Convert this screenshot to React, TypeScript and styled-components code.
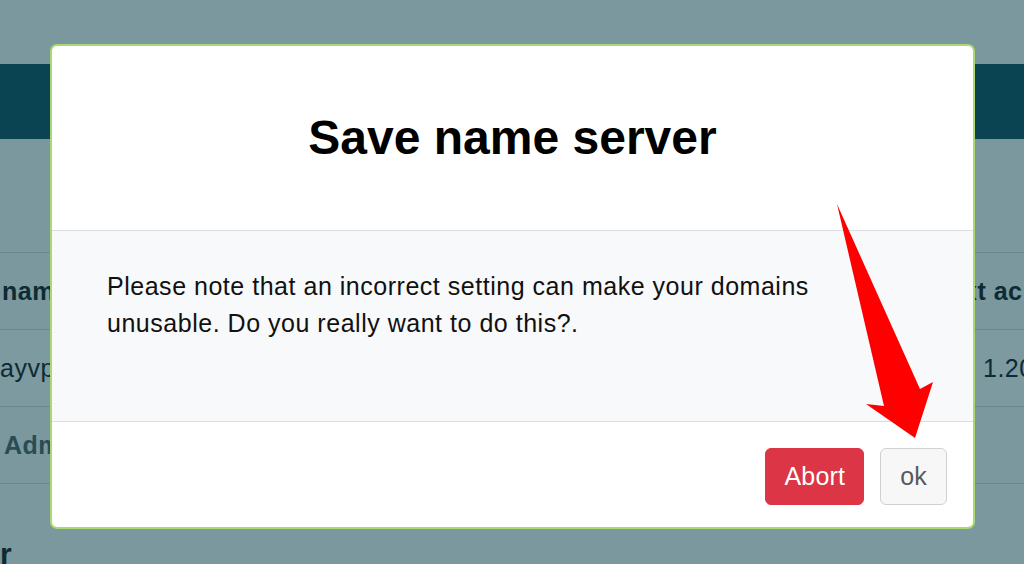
import React from "react";
import styled, { createGlobalStyle } from "styled-components";

const GlobalStyle = createGlobalStyle`
  html, body { margin: 0; padding: 0; }
  body {
    font-family: "Liberation Sans", Arial, Helvetica, sans-serif;
    overflow: hidden;
  }
`;

const Page = styled.div`
  position: relative;
  width: 1024px;
  height: 564px;
  overflow: hidden;
  background: #7a989e;
  display: flex;
  flex-direction: column;
`;

const Navbar = styled.div`
  margin-top: 64px;
  height: 75px;
  background: #0a4351;
  flex-shrink: 0;
`;

const Table = styled.div`
  margin-top: 113px;
  display: flex;
  flex-direction: column;
`;

const Row = styled.div<{ $shade?: boolean }>`
  display: grid;
  grid-template-columns: 963px 1fr;
  align-items: center;
  height: 76px;
  border-top: 1px solid #6a878d;
  background: ${(p) => (p.$shade ? "#7c9aa0" : "transparent")};
  &:last-child {
    border-bottom: 1px solid #6a878d;
  }
`;

const Cell = styled.div<{ $bold?: boolean; $muted?: boolean; $pad?: number }>`
  font-size: 25px;
  letter-spacing: 0.5px;
  line-height: 36px;
  white-space: nowrap;
  overflow: hidden;
  padding-left: ${(p) => p.$pad ?? 0}px;
  font-weight: ${(p) => (p.$bold ? 700 : 400)};
  color: ${(p) => (p.$muted ? "#2a4c55" : "#0e2b33")};
`;

const SectionHeading = styled.div`
  margin-top: 52px;
  font-size: 30px;
  font-weight: 700;
  color: #0e2b33;
  line-height: 36px;
`;

const Modal = styled.div`
  position: absolute;
  left: 50px;
  top: 44px;
  width: 925px;
  height: 485px;
  box-sizing: border-box;
  border: 2px solid #acd872;
  border-radius: 7px;
  background: #ffffff;
  overflow: hidden;
  display: flex;
  flex-direction: column;
`;

const ModalHeader = styled.div`
  height: 184px;
  display: flex;
  align-items: center;
  justify-content: center;
  border-bottom: 1px solid #dcdfe2;
`;

const Title = styled.h1`
  margin: 0;
  font-size: 48px;
  font-weight: 700;
  line-height: 1.2;
  color: #000;
`;

const ModalBody = styled.div`
  height: 191px;
  box-sizing: border-box;
  background: #f8f9fa;
  padding: 37px 100px 0 55px;
  border-bottom: 1px solid #dcdfe2;
  font-size: 25px;
  letter-spacing: 0.52px;
  line-height: 37px;
  color: #111;
`;

const ModalFooter = styled.div`
  flex: 1;
  display: flex;
  align-items: center;
  justify-content: flex-end;
  gap: 16px;
  padding-right: 26px;
  padding-top: 3px;
`;

const Button = styled.button<{ $variant: "danger" | "light" }>`
  font-family: "Liberation Sans", Arial, Helvetica, sans-serif;
  font-size: 25px;
  letter-spacing: 0.2px;
  line-height: 35px;
  padding: 10px ${(p) => (p.$variant === "danger" ? 18 : 19)}px;
  border-radius: 6px;
  border: 1px solid ${(p) => (p.$variant === "danger" ? "#dc3545" : "#cfd1d3")};
  background: ${(p) => (p.$variant === "danger" ? "#dc3545" : "#f7f7f7")};
  color: ${(p) => (p.$variant === "danger" ? "#ffffff" : "#555a5e")};
  cursor: pointer;
`;

const ArrowSvg = styled.svg`
  position: absolute;
  left: 0;
  top: 0;
  pointer-events: none;
`;

export default function App() {
  return (
    <>
      <GlobalStyle />
      <Page>
        <Navbar />
        <Table>
          <Row>
            <Cell $bold $pad={2}>name</Cell>
            <Cell $bold>xt ac</Cell>
          </Row>
          <Row $shade>
            <Cell>ayvpn</Cell>
            <Cell $pad={20}>1.20</Cell>
          </Row>
          <Row>
            <Cell $bold $muted $pad={4}>Admin</Cell>
            <Cell />
          </Row>
        </Table>
        <SectionHeading>r</SectionHeading>

        <Modal>
          <ModalHeader>
            <Title>Save name server</Title>
          </ModalHeader>
          <ModalBody>
            Please note that an incorrect setting can make your domains unusable. Do you really want to do this?.
          </ModalBody>
          <ModalFooter>
            <Button $variant="danger">Abort</Button>
            <Button $variant="light">ok</Button>
          </ModalFooter>
        </Modal>

        <ArrowSvg width="1024" height="564" viewBox="0 0 1024 564">
          <polygon
            points="837,204 920,389 933,382 915,438 866,404 884,406"
            fill="#fe0000"
          />
        </ArrowSvg>
      </Page>
    </>
  );
}
